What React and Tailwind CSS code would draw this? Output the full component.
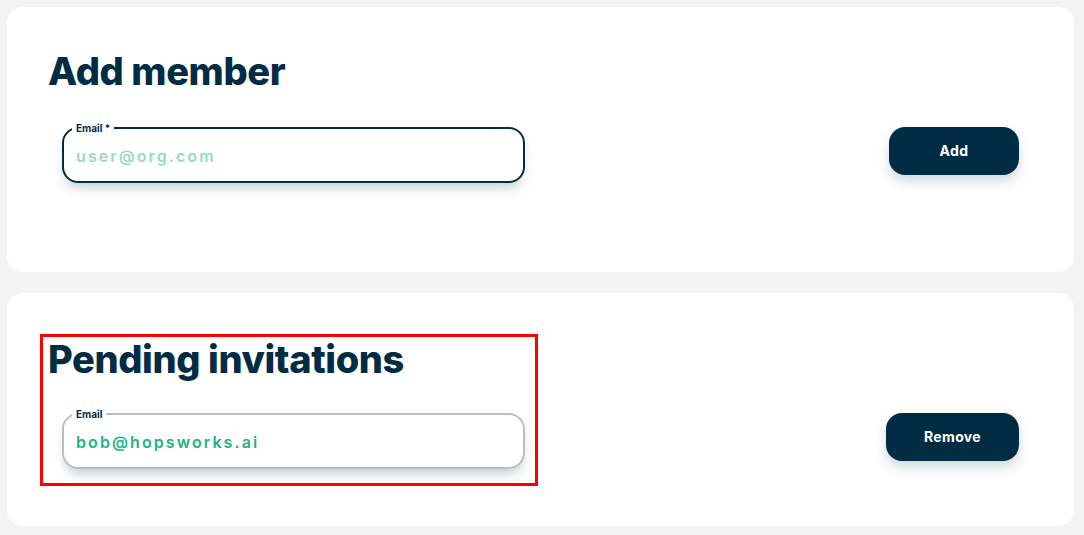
export default function App() {
  return (
    <div className="min-h-screen bg-[#f3f3f3] p-[7px] pr-[10px] font-['Inter',sans-serif]">
      <div className="flex flex-col gap-[21px]">
        {/* Add member card */}
        <section className="h-[265px] rounded-2xl bg-white pl-[41px] pr-[55px] pt-[40px]">
          <h1 className="text-[38px] font-extrabold leading-[48px] tracking-[-0.01em] text-[#022c43]">
            Add member
          </h1>
          <div className="mt-[27px] flex items-start justify-between">
            <EmailField label="Email *" placeholder="user@org.com" active />
            <button
              type="button"
              className="mt-[5px] h-12 w-[130px] rounded-2xl bg-[#022c43] text-sm font-bold tracking-wide text-white shadow-[0_6px_12px_rgba(2,44,67,0.18)]"
            >
              Add
            </button>
          </div>
        </section>

        {/* Pending invitations card */}
        <section className="relative h-[233px] rounded-2xl bg-white pl-[41px] pr-[55px] pt-[42px]">
          <h2 className="text-[38px] font-extrabold leading-[48px] tracking-[-0.01em] text-[#022c43]">
            Pending invitations
          </h2>
          <div className="mt-[25px] flex items-start justify-between">
            <EmailField label="Email" value="bob@hopsworks.ai" />
            <button
              type="button"
              className="mt-[5px] h-12 w-[133px] rounded-2xl bg-[#022c43] text-sm font-bold tracking-wide text-white shadow-[0_6px_12px_rgba(2,44,67,0.18)]"
            >
              Remove
            </button>
          </div>
          <div className="pointer-events-none absolute left-[33px] top-[41px] h-[152px] w-[498px] border-[3px] border-[#ff0000]" />
        </section>
      </div>
    </div>
  );
}

function EmailField({ label, placeholder, value, active }) {
  return (
    <fieldset
      className={
        "ml-[14px] h-[61px] w-[463px] rounded-2xl border-2 px-[10px] shadow-[0_8px_12px_-4px_rgba(2,44,67,0.25)] " +
        (active ? "border-[#022c43]" : "border-[#bdbdbd]")
      }
    >
      <legend className="-ml-[2px] px-1 text-[10px] font-bold leading-3 text-[#022c43]">
        {label}
      </legend>
      <div
        className={
          "pl-[2px] pt-[10px] text-base font-semibold tracking-[0.13em] " +
          (value ? "text-[#1db382]" : "text-[#93dcc6]")
        }
      >
        {value || placeholder}
      </div>
    </fieldset>
  );
}
